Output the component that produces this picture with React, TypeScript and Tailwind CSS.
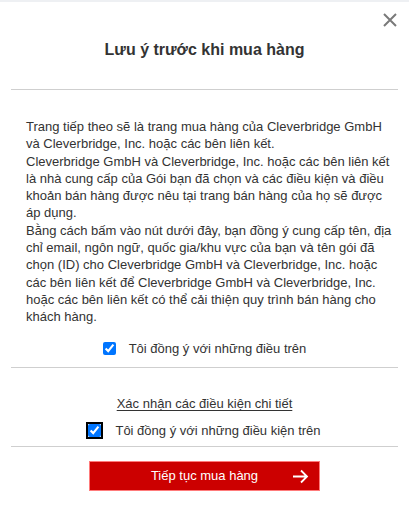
const BODY_LINES = [
  "Trang tiếp theo sẽ là trang mua hàng của Cleverbridge GmbH",
  "và Cleverbridge, Inc. hoặc các bên liên kết.",
  "Cleverbridge GmbH và Cleverbridge, Inc. hoặc các bên liên kết",
  "là nhà cung cấp của Gói bạn đã chọn và các điều kiện và điều",
  "khoản bán hàng được nêu tại trang bán hàng của họ sẽ được",
  "áp dụng.",
  "Bằng cách bấm vào nút dưới đây, bạn đồng ý cung cấp tên, địa",
  "chỉ email, ngôn ngữ, quốc gia/khu vực của bạn và tên gói đã",
  "chọn (ID) cho Cleverbridge GmbH và Cleverbridge, Inc. hoặc",
  "các bên liên kết để Cleverbridge GmbH và Cleverbridge, Inc.",
  "hoặc các bên liên kết có thể cải thiện quy trình bán hàng cho",
  "khách hàng.",
];

export default function App() {
  return (
    <div
      className="relative h-[528px] w-full border-t-2 border-[#eef0f3] bg-white text-[#333]"
      style={{ fontFamily: '"Liberation Sans", Arial, sans-serif' }}
    >
      <button className="absolute right-[12px] top-[11px] p-0 text-[#7a7a7a]" aria-label="Đóng">
        <svg width="14" height="14" viewBox="0 0 14 14" fill="none" stroke="currentColor" strokeWidth="2">
          <path d="M1 1l12 12M13 1L1 13" />
        </svg>
      </button>

      <h2 className="pt-[38px] text-center text-[16px] font-bold leading-[20px]">
        Lưu ý trước khi mua hàng
      </h2>

      <div className="mx-[11px] mt-[29px] border-t border-[#cfcfcf]" />

      {/* line breaks kept as in the original dialog */}
      <div className="ml-[26px] mt-[28px] text-[13px] leading-[17.3px]">
        {BODY_LINES.map((line, i) => (
          <div key={i} className="whitespace-nowrap">
            {line}
          </div>
        ))}
      </div>

      <label className="mt-[14px] flex items-center justify-center gap-[13px] text-[13px] leading-[18px]">
        <input type="checkbox" defaultChecked className="m-0 h-[13px] w-[13px] accent-[#0075ff]" />
        <span>Tôi đồng ý với những điều trên</span>
      </label>

      <div className="mx-[11px] mt-[9px] border-t border-[#cfcfcf]" />

      <div className="mt-[27px] text-center text-[13px] leading-[18px]">
        <a href="#" className="underline underline-offset-2">Xác nhận các điều kiện chi tiết</a>
      </div>

      <label className="mt-[9px] flex items-center justify-center gap-[14px] text-[13px] leading-[18px]">
        <input
          type="checkbox"
          defaultChecked
          className="m-0 h-[13px] w-[13px] accent-[#0075ff] outline-2 outline-offset-0 outline-black [outline-style:solid]"
        />
        <span>Tôi đồng ý với những điều kiện trên</span>
      </label>

      <div className="mx-[11px] mt-[6px] border-t border-[#cfcfcf]" />

      <div className="mt-[14px] flex justify-center">
        <button className="relative flex h-[30px] w-[231px] items-center justify-center border-[1.5px] border-[#ff7b7b] bg-[#cc0000] text-[13px] text-white">
          Tiếp tục mua hàng
          <svg
            className="absolute right-[10px] top-[7px]"
            width="17"
            height="15"
            viewBox="0 0 17 15"
            fill="none"
            stroke="currentColor"
            strokeWidth="1.8"
          >
            <path d="M1 7.5h14M9 1.5l6 6-6 6" />
          </svg>
        </button>
      </div>
    </div>
  );
}
